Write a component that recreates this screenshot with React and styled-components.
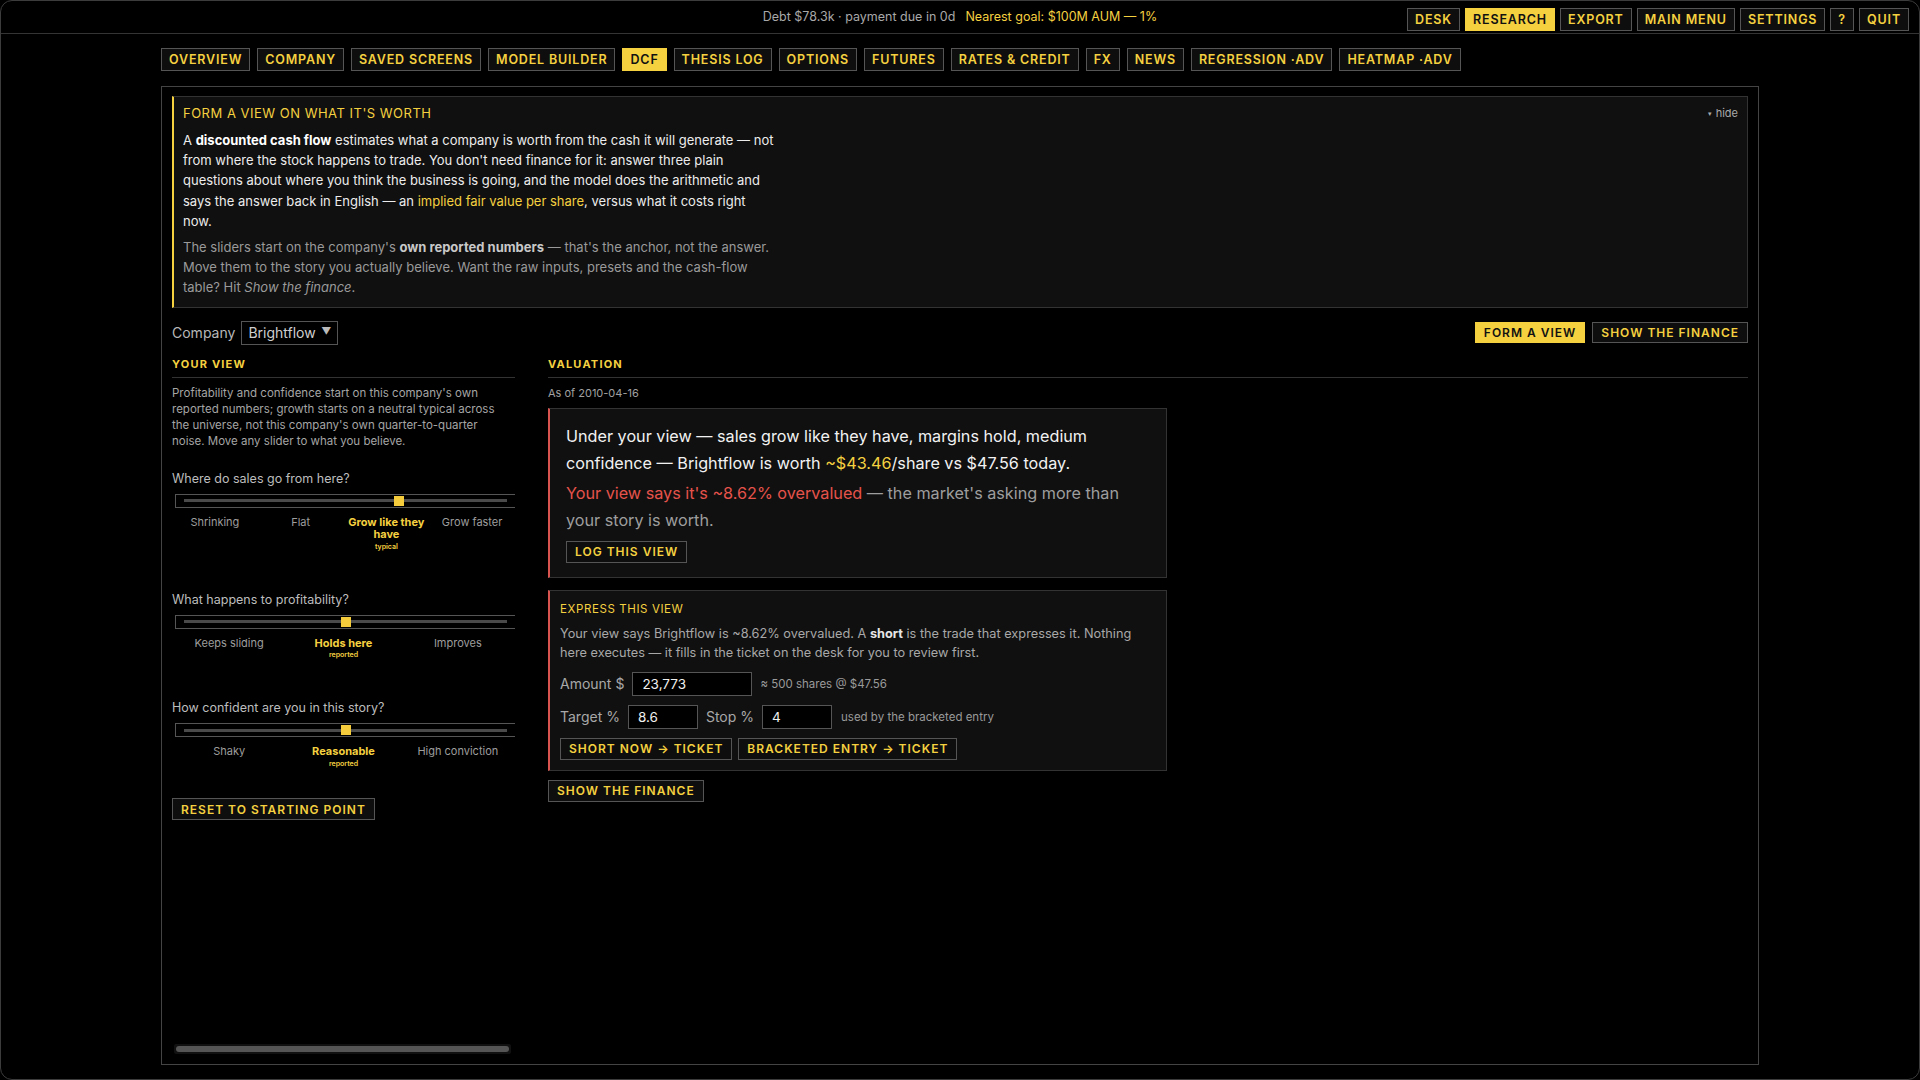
import React from "react";
import styled, { createGlobalStyle, css } from "styled-components";

const YELLOW = "#f5d140";
const RED = "#e5534b";

const Global = createGlobalStyle`
  html, body { margin: 0; padding: 0; background: #000; }
  body { font-family: Inter, "Noto Sans", "Liberation Sans", sans-serif; color: #ddd; }
  * { box-sizing: border-box; }
`;

const Window = styled.div`
  width: 1920px;
  height: 1080px;
  border: 1px solid #3c3c3c;
  border-radius: 12px;
  background: #000;
  display: flex;
  flex-direction: column;
  overflow: hidden;
`;

const TopBar = styled.div`
  height: 33px;
  flex: none;
  border-bottom: 1px solid #343434;
  display: grid;
  grid-template-columns: 1fr auto 1fr;
  align-items: center;
  padding: 0 10px 0 10px;
`;

const Status = styled.div`
  font-size: 12.5px;
  color: #a8a8a8;
  display: flex;
  gap: 10px;
  padding-bottom: 2px;
`;

const Goal = styled.span`
  color: ${YELLOW};
`;

const TopButtons = styled.div`
  display: flex;
  justify-content: flex-end;
  gap: 5px;
  margin-top: 5px;
`;

const Btn = styled.button`
  font-family: inherit;
  height: ${(p) => p.$h || 23}px;
  padding: 0 ${(p) => p.$px || 7}px;
  border: 1px solid #555;
  background: #0e0e0e;
  color: ${YELLOW};
  font-size: ${(p) => p.$fs || 12.5}px;
  font-weight: ${(p) => p.$w || 500};
  letter-spacing: ${(p) => p.$ls || 0.9}px;
  text-transform: uppercase;
  white-space: nowrap;
  cursor: pointer;
  display: inline-flex;
  align-items: center;
  ${(p) =>
    p.$active &&
    css`
      background: ${YELLOW};
      border-color: ${YELLOW};
      color: #111;
    `}
`;

const Nav = styled.nav`
  flex: none;
  display: flex;
  gap: 7px;
  padding: 14px 160px 0;
`;

const Panel = styled.main`
  flex: 1;
  margin: 15px 160px 14px;
  border: 1px solid #444;
  padding: 9px 10px 10px;
  display: flex;
  flex-direction: column;
  min-height: 0;
`;

const Intro = styled.section`
  position: relative;
  background: #101010;
  border: 1px solid #333;
  border-left: 2px solid ${YELLOW};
  padding: 7px 9px 9px 9px;
`;

const IntroTitle = styled.div`
  color: ${YELLOW};
  font-size: 13px;
  letter-spacing: 0.5px;
  line-height: 18px;
  margin-bottom: 8px;
`;

const IntroText = styled.p`
  margin: 0 0 ${(p) => p.$mb || 0}px;
  max-width: 594px;
  font-size: 13px;
  line-height: 20.2px;
  color: ${(p) => (p.$dim ? "#9a9a9a" : "#ececec")};
  b { font-weight: 700; color: ${(p) => (p.$dim ? "#c8c8c8" : "#fff")}; }
  em { font-style: italic; }
`;

const Hl = styled.span`
  color: ${YELLOW};
`;

const Hide = styled.span`
  position: absolute;
  top: 9px;
  right: 9px;
  font-size: 11px;
  color: #aaa;
  display: flex;
  align-items: center;
  gap: 4px;
  &::before {
    content: "▾";
    font-size: 7px;
  }
`;

const CompanyRow = styled.div`
  display: flex;
  align-items: center;
  justify-content: space-between;
  margin-top: 13px;
  height: 24px;
`;

const Group = styled.div`
  display: flex;
  align-items: center;
  gap: ${(p) => p.$gap || 6}px;
`;

const Label = styled.span`
  font-size: 14px;
  color: #b8b8b8;
`;

const Select = styled.div`
  height: 24px;
  width: 97px;
  border: 1px solid #555;
  padding: 0 6px;
  display: flex;
  align-items: center;
  justify-content: space-between;
  font-size: 14px;
  color: #cfcfcf;
  &::after {
    content: "▼";
    font-size: 10px;
    color: #bbb;
    margin-top: -4px;
  }
`;

const Columns = styled.div`
  flex: 1;
  display: grid;
  grid-template-columns: 343px 1fr;
  column-gap: 33px;
  margin-top: 12px;
  min-height: 0;
`;

const Col = styled.div`
  display: flex;
  flex-direction: column;
`;

const Heading = styled.h3`
  margin: 0;
  font-size: 11px;
  font-weight: 700;
  letter-spacing: 1.2px;
  color: ${YELLOW};
  line-height: 14px;
  padding-bottom: 6px;
  border-bottom: 1px solid #333;
`;

const Small = styled.p`
  margin: 7px 0 0;
  max-width: 330px;
  font-size: 11.5px;
  line-height: 16px;
  color: #a5a5a5;
`;

const Question = styled.div`
  margin-top: ${(p) => p.$mt || 41}px;
  font-size: 12.5px;
  line-height: 16px;
  color: #bdbdbd;
`;

const SliderBox = styled.div`
  position: relative;
  margin: 7px 0 0 3px;
  height: 14px;
  border: 1px solid #555;
  border-right: none;
  &::before {
    content: "";
    position: absolute;
    left: 8px;
    right: 8px;
    top: 4.5px;
    height: 3px;
    background: #4a4a4a;
  }
`;

const Thumb = styled.span`
  position: absolute;
  top: 1px;
  width: 10px;
  height: 10px;
  margin-left: -5px;
  background: #f4cc3c;
`;

const Ticks = styled.div`
  display: grid;
  grid-template-columns: repeat(${(p) => p.$n}, 1fr);
  margin-top: 8px;
`;

const Tick = styled.div`
  text-align: center;
  font-size: 11px;
  line-height: 12.5px;
  padding: 0 3px;
  color: ${(p) => (p.$on ? YELLOW : "#9d9d9d")};
  font-weight: ${(p) => (p.$on ? 700 : 400)};
`;

const TickSub = styled.div`
  font-size: 7px;
  line-height: 9px;
  font-weight: 600;
  margin-top: 1px;
`;

const Reset = styled.div`
  margin-top: 30px;
`;

const Scroll = styled.div`
  margin-top: auto;
  margin-left: 2px;
  width: 337px;
  height: 10px;
  padding: 2px;
  background: #111;
  border-radius: 2px;
  &::after {
    content: "";
    display: block;
    height: 6px;
    border-radius: 3px;
    background: #555;
  }
`;

const Stamp = styled.div`
  margin-top: 8px;
  font-size: 11px;
  line-height: 14px;
  color: #a0a0a0;
`;

const Card = styled.div`
  margin-top: ${(p) => p.$mt || 12}px;
  width: 619px;
  background: #101010;
  border: 1px solid #333;
  border-left: 2px solid #d9534f;
  padding: ${(p) => p.$pad || "11px 16px 10px"};
`;

const Verdict = styled.p`
  margin: 0 0 ${(p) => p.$mb || 0}px;
  font-size: 16.2px;
  line-height: 27px;
  color: ${(p) => (p.$dim ? "#9e9e9e" : "#f2f2f2")};
`;

const Red = styled.span`
  color: ${RED};
`;

const CardTitle = styled.div`
  font-size: 11.5px;
  letter-spacing: 0.6px;
  color: ${YELLOW};
  line-height: 14px;
`;

const CardText = styled.p`
  margin: 8px 0 0;
  font-size: 12.75px;
  line-height: 19.5px;
  color: #a8a8a8;
  b { color: #e6e6e6; font-weight: 700; }
`;

const FormRow = styled.div`
  display: flex;
  align-items: center;
  gap: ${(p) => p.$gap || 8}px;
  margin-top: ${(p) => p.$mt || 8}px;
`;

const Field = styled.div`
  width: ${(p) => p.$w}px;
  height: 24px;
  border: 1px solid #555;
  background: #000;
  padding: 0 9px;
  display: flex;
  align-items: center;
  font-size: 13.5px;
  color: #f0f0f0;
`;

const FieldLabel = styled.span`
  font-size: 14px;
  color: #a8a8a8;
`;

const Hint = styled.span`
  font-size: 11.5px;
  color: #9a9a9a;
  margin-left: ${(p) => p.$ml || 0}px;
`;

const Slider = ({ question, mt, pos, options }) => (
  <>
    <Question $mt={mt}>{question}</Question>
    <SliderBox>
      <Thumb style={{ left: `calc(8px + (100% - 16px) * ${pos})` }} />
    </SliderBox>
    <Ticks $n={options.length}>
      {options.map((o) => (
        <Tick key={o.label} $on={!!o.sub}>
          {o.label}
          {o.sub && <TickSub>{o.sub}</TickSub>}
        </Tick>
      ))}
    </Ticks>
  </>
);

const tabs = [
  "Overview",
  "Company",
  "Saved Screens",
  "Model Builder",
  "DCF",
  "Thesis Log",
  "Options",
  "Futures",
  "Rates & Credit",
  "FX",
  "News",
  "Regression ·ADV",
  "Heatmap ·ADV",
];

const topLinks = ["Desk", "Research", "Export", "Main Menu", "Settings", "?", "Quit"];

export default function App() {
  return (
    <Window>
      <Global />
      <TopBar>
        <span />
        <Status>
          <span>Debt $78.3k · payment due in 0d</span>
          <Goal>Nearest goal: $100M AUM — 1%</Goal>
        </Status>
        <TopButtons>
          {topLinks.map((t) => (
            <Btn key={t} $active={t === "Research"} $w={600} $ls={0.85}>
              {t}
            </Btn>
          ))}
        </TopButtons>
      </TopBar>

      <Nav>
        {tabs.map((t) => (
          <Btn key={t} $active={t === "DCF"} $w={600} $ls={0.83}>
            {t}
          </Btn>
        ))}
      </Nav>

      <Panel>
        <Intro>
          <Hide>hide</Hide>
          <IntroTitle>FORM A VIEW ON WHAT IT'S WORTH</IntroTitle>
          <IntroText $mb={6}>
            A <b>discounted cash flow</b> estimates what a company is worth from the cash it will
            generate — not from where the stock happens to trade. You don't need finance for it:
            answer three plain questions about where you think the business is going, and the model
            does the arithmetic and says the answer back in English — an{" "}
            <Hl>implied fair value per share</Hl>, versus what it costs right now.
          </IntroText>
          <IntroText $dim>
            The sliders start on the company's <b>own reported numbers</b> — that's the anchor, not
            the answer. Move them to the story you actually believe. Want the raw inputs, presets and
            the cash-flow table? Hit <em>Show the finance</em>.
          </IntroText>
        </Intro>

        <CompanyRow>
          <Group>
            <Label>Company</Label>
            <Select>Brightflow</Select>
          </Group>
          <Group $gap={7}>
            <Btn $active $fs={12} $w={600} $ls={1} $px={8} $h={21}>
              Form a view
            </Btn>
            <Btn $fs={12} $w={600} $ls={1} $px={8} $h={21}>
              Show the finance
            </Btn>
          </Group>
        </CompanyRow>

        <Columns>
          <Col>
            <Heading>YOUR VIEW</Heading>
            <Small>
              Profitability and confidence start on this company's own reported numbers; growth
              starts on a neutral typical across the universe, not this company's own
              quarter-to-quarter noise. Move any slider to what you believe.
            </Small>
            <Slider
              question="Where do sales go from here?"
              mt={22}
              pos={0.667}
              options={[
                { label: "Shrinking" },
                { label: "Flat" },
                { label: "Grow like they have", sub: "typical" },
                { label: "Grow faster" },
              ]}
            />
            <Slider
              question="What happens to profitability?"
              pos={0.5}
              options={[
                { label: "Keeps sliding" },
                { label: "Holds here", sub: "reported" },
                { label: "Improves" },
              ]}
            />
            <Slider
              question="How confident are you in this story?"
              pos={0.5}
              options={[
                { label: "Shaky" },
                { label: "Reasonable", sub: "reported" },
                { label: "High conviction" },
              ]}
            />
            <Reset>
              <Btn $fs={12} $w={600} $ls={1} $px={8} $h={22}>
                Reset to starting point
              </Btn>
            </Reset>
            <Scroll />
          </Col>

          <Col>
            <Heading>VALUATION</Heading>
            <Stamp>As of 2010-04-16</Stamp>
            <Card $mt={8} $pad="14px 16px 14px">
              <Verdict $mb={3}>
                Under your view — sales grow like they have, margins hold, medium confidence —
                Brightflow is worth <Hl>~$43.46</Hl>/share vs $47.56 today.
              </Verdict>
              <Verdict $dim>
                <Red>Your view says it's ~8.62% overvalued</Red> — the market's asking more than
                your story is worth.
              </Verdict>
              <FormRow $mt={7}>
                <Btn $fs={12} $w={600} $ls={1} $px={8} $h={22}>
                  Log this view
                </Btn>
              </FormRow>
            </Card>

            <Card $pad="11px 10px 10px">
              <CardTitle>EXPRESS THIS VIEW</CardTitle>
              <CardText>
                Your view says Brightflow is ~8.62% overvalued. A <b>short</b> is the trade that
                expresses it. Nothing here executes — it fills in the ticket on the desk for you to
                review first.
              </CardText>
              <FormRow $mt={9}>
                <FieldLabel>Amount $</FieldLabel>
                <Field $w={120}>23,773</Field>
                <Hint>≈ 500 shares @ $47.56</Hint>
              </FormRow>
              <FormRow $mt={9}>
                <FieldLabel>Target %</FieldLabel>
                <Field $w={70}>8.6</Field>
                <FieldLabel>Stop %</FieldLabel>
                <Field $w={70}>4</Field>
                <Hint $ml={1}>used by the bracketed entry</Hint>
              </FormRow>
              <FormRow $mt={9} $gap={6}>
                <Btn $fs={12} $w={600} $ls={1} $px={8} $h={22}>
                  Short now → ticket
                </Btn>
                <Btn $fs={12} $w={600} $ls={1} $px={8} $h={22}>
                  Bracketed entry → ticket
                </Btn>
              </FormRow>
            </Card>
            <FormRow $mt={9}>
              <Btn $fs={12} $w={600} $ls={1} $px={8} $h={22}>
                Show the finance
              </Btn>
            </FormRow>
          </Col>
        </Columns>
      </Panel>
    </Window>
  );
}
